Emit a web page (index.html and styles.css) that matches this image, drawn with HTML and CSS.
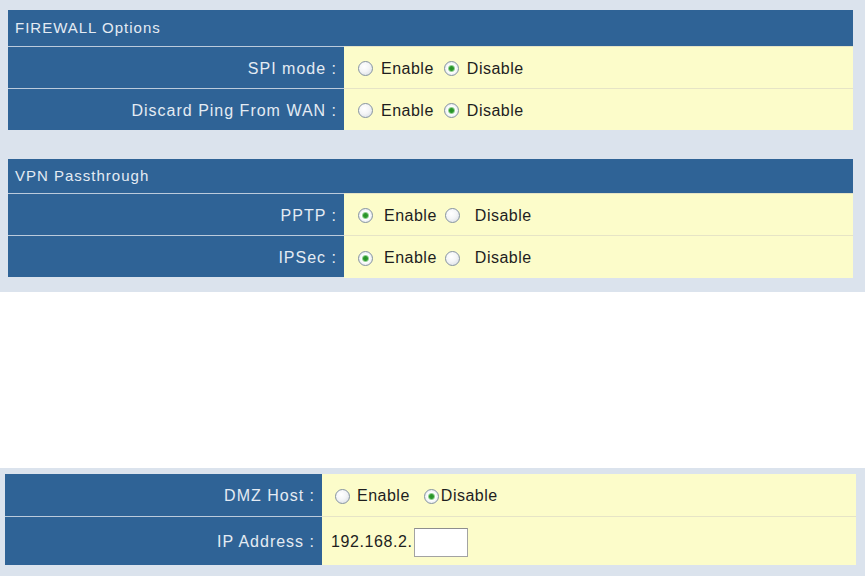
FILE: index.html
```html
<!DOCTYPE html>
<html>
<head>
<meta charset="utf-8">
<link rel="stylesheet" href="styles.css">
</head>
<body>
<div class="panel top">
  <div class="tbl sec1">
    <div class="hdr">FIREWALL Options</div>
    <div class="lbl">SPI mode :</div>
    <div class="val fw">
      <label class="opt"><input type="radio" name="spi">Enable</label>
      <label class="opt"><input type="radio" name="spi" checked>Disable</label>
    </div>
    <div class="lbl">Discard Ping From WAN :</div>
    <div class="val fw">
      <label class="opt"><input type="radio" name="ping">Enable</label>
      <label class="opt"><input type="radio" name="ping" checked>Disable</label>
    </div>
  </div>
  <div class="tbl sec2">
    <div class="hdr">VPN Passthrough</div>
    <div class="lbl">PPTP :</div>
    <div class="val vpn">
      <label class="opt"><input type="radio" name="pptp" checked>Enable</label>
      <label class="opt"><input type="radio" name="pptp">Disable</label>
    </div>
    <div class="lbl">IPSec :</div>
    <div class="val vpn">
      <label class="opt"><input type="radio" name="ipsec" checked>Enable</label>
      <label class="opt"><input type="radio" name="ipsec">Disable</label>
    </div>
  </div>
</div>
<div class="spacer"></div>
<div class="panel bottom">
  <div class="tbl sec3">
    <div class="lbl">DMZ Host :</div>
    <div class="val dmz">
      <label class="opt"><input type="radio" name="dmz">Enable</label>
      <label class="opt"><input type="radio" name="dmz" checked>Disable</label>
    </div>
    <div class="lbl tall">IP Address :</div>
    <div class="val ip tall">
      <span class="ipfix">192.168.2.</span><input type="text" class="ipbox">
    </div>
  </div>
</div>
</body>
</html>
```
FILE: styles.css
```css
html, body {
  margin: 0;
  padding: 0;
  background: #ffffff;
  font-family: "Liberation Sans", Arial, sans-serif;
}

.panel {
  background: #dbe3ed;
}

.top {
  padding: 10px 12px 14px 8px;
  display: flex;
  flex-direction: column;
  gap: 29px;
}

.spacer {
  height: 176px;
}

.bottom {
  padding: 6px 9px 11px 5px;
}

.tbl {
  display: grid;
  grid-template-columns: 336px 1fr;
}

.sec3 {
  grid-template-columns: 317px 1fr;
}

.hdr {
  grid-column: 1 / -1;
  background: #2f6396;
  color: #e4ebf3;
  font-size: 15px;
  letter-spacing: 1px;
  height: 36px;
  line-height: 36px;
  padding-left: 7px;
}

.sec2 .hdr {
  height: 34px;
  line-height: 34px;
}

.lbl {
  background: #2f6396;
  color: #e4ebf3;
  font-size: 16px;
  letter-spacing: 1px;
  text-align: right;
  padding-right: 7px;
  display: flex;
  align-items: center;
  justify-content: flex-end;
  border-top: 1px solid #bccbdc;
  padding-top: 2px;
  height: 39px;
}

.val {
  background: #fcfcca;
  color: #1e1e1e;
  font-size: 16px;
  letter-spacing: 0.5px;
  display: flex;
  align-items: center;
  border-top: 1px solid #e6e4c6;
  padding-top: 2px;
  height: 39px;
}

.sec2 .lbl:last-of-type,
.sec2 .val:last-of-type {
  height: 40px;
}

.sec3 .lbl:first-child,
.sec3 .val:nth-child(2) {
  border-top: none;
  height: 40px;
}

.tall {
  height: 46px !important;
}

.opt {
  display: inline-flex;
  align-items: center;
}

.fw {
  padding-left: 14px;
}
.fw .opt input { margin-right: 8px; }
.fw .opt + .opt { margin-left: 10px; }

.vpn {
  padding-left: 14px;
}
.vpn .opt input { margin-right: 11px; }
.vpn .opt + .opt { margin-left: 8px; }
.vpn .opt + .opt input { margin-right: 15px; }

.dmz {
  padding-left: 13px;
}
.dmz .opt input { margin-right: 7px; }
.dmz .opt + .opt { margin-left: 14px; }
.dmz .opt + .opt input { margin-right: 2px; }

input[type="radio"] {
  -webkit-appearance: none;
  appearance: none;
  width: 15px;
  height: 15px;
  margin: 0;
  border: 1.5px solid #8593a2;
  border-radius: 50%;
  background: radial-gradient(circle at 40% 35%, #ffffff 0, #f4f5f7 45%, #d3d9e0 100%);
  box-sizing: border-box;
  flex: none;
}

input[type="radio"]:checked {
  background: radial-gradient(circle, #249024 0, #2f9a2f 2px, #93d193 3px, #ffffff 4px, #f2f4f6 60%, #d3d9e0 100%);
}

.ip {
  padding-left: 9px;
}

.ipfix {
  letter-spacing: 0.6px;
}

.ipbox {
  width: 54px;
  height: 29px;
  box-sizing: border-box;
  margin: 0 0 0 1px;
  border: 1px solid #a3a3a3;
  border-top-color: #8e8e8e;
  background: #ffffff;
  padding: 0 3px;
  font-family: inherit;
  font-size: 14px;
}
```
